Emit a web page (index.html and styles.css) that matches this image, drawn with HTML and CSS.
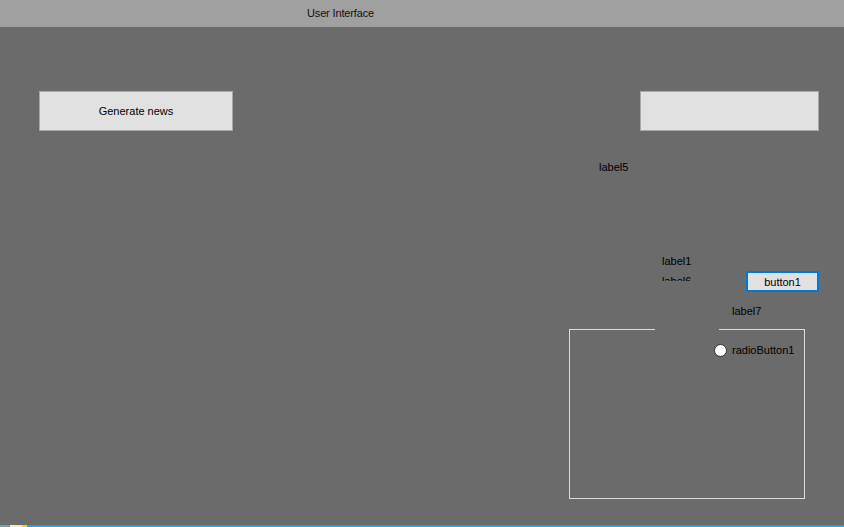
FILE: index.html
```html
<!DOCTYPE html>
<html>
<head>
<meta charset="utf-8">
<link rel="stylesheet" href="styles.css">
</head>
<body>
<div class="window">
  <div class="titlebar"><span class="title">User Interface</span></div>
  <div class="form">
    <div class="btn btn-generate">Generate news</div>
    <div class="btn btn-empty"></div>
    <div class="label label5">label5</div>
    <div class="label label1">label1</div>
    <div class="label label6">label6</div>
    <div class="btn btn-one">button1</div>
    <div class="label label7">label7</div>
    <div class="group">
      <div class="group-gap"></div>
    </div>
    <div class="radio"><span class="radio-dot"></span><span>radioButton1</span></div>
  </div>
  <div class="taskbar">
    <span class="tb-a"></span><span class="tb-b"></span><span class="tb-c"></span><span class="tb-d"></span>
  </div>
</div>
</body>
</html>
```
FILE: styles.css
```css
html, body {
  margin: 0;
  padding: 0;
}
body {
  width: 844px;
  height: 527px;
  overflow: hidden;
  font-family: "Liberation Sans", Arial, sans-serif;
  font-size: 11px;
  color: #000;
}
.window {
  display: flex;
  flex-direction: column;
  width: 844px;
  height: 527px;
  background: #6b6b6b;
}
.titlebar {
  height: 27px;
  flex: none;
  background: #a0a0a0;
  display: flex;
  align-items: center;
  padding-left: 307px;
  box-sizing: border-box;
}
.title {
  line-height: 13px;
  color: #111;
  letter-spacing: -0.15px;
}
.form {
  position: relative;
  flex: 1;
}
.btn {
  position: absolute;
  box-sizing: border-box;
  background: #e1e1e1;
  border: 1px solid #a8a8a8;
  display: flex;
  align-items: center;
  justify-content: center;
}
.btn-generate {
  left: 39px;
  top: 64px;
  width: 194px;
  height: 40px;
}
.btn-empty {
  left: 640px;
  top: 64px;
  width: 179px;
  height: 40px;
}
.btn-one {
  left: 746px;
  top: 244px;
  width: 73px;
  height: 21px;
  border: 2px solid #0078d7;
}
.label {
  position: absolute;
  line-height: 13px;
  white-space: nowrap;
}
.label5 { left: 599px; top: 134px; }
.label1 { left: 662px; top: 228px; }
.label6 {
  left: 662px;
  top: 248px;
  height: 6px;
  overflow: hidden;
}
.label7 { left: 732px; top: 278px; }
.group {
  position: absolute;
  left: 569px;
  top: 302px;
  width: 236px;
  height: 170px;
  box-sizing: border-box;
  border: 1px solid #dcdcdc;
}
.group-gap {
  position: absolute;
  left: 85px;
  top: -1px;
  width: 64px;
  height: 1px;
  background: #6b6b6b;
}
.radio {
  position: absolute;
  left: 714px;
  top: 317px;
  display: flex;
  align-items: center;
  gap: 5px;
  line-height: 13px;
}
.radio-dot {
  width: 11px;
  height: 11px;
  border-radius: 50%;
  background: #fff;
  border: 1px solid #333;
}
.taskbar {
  height: 2px;
  flex: none;
  display: flex;
}
.tb-a { width: 10px; background: #7aa0b8; }
.tb-b { width: 12px; background: #f4e9c0; }
.tb-c { width: 5px; background: #f5c842; }
.tb-d { flex: 1; background: #1ea7e8; }
```
